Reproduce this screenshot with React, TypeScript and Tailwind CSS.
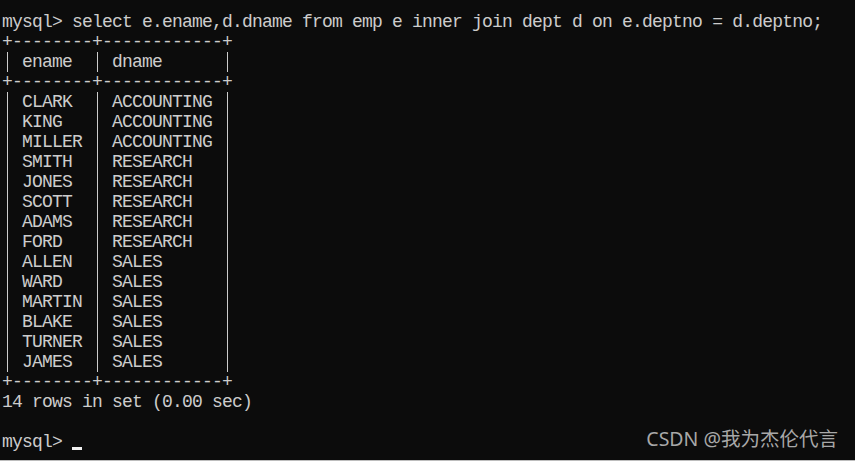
const rows: [string, string][] = [
  ["CLARK", "ACCOUNTING"],
  ["KING", "ACCOUNTING"],
  ["MILLER", "ACCOUNTING"],
  ["SMITH", "RESEARCH"],
  ["JONES", "RESEARCH"],
  ["SCOTT", "RESEARCH"],
  ["ADAMS", "RESEARCH"],
  ["FORD", "RESEARCH"],
  ["ALLEN", "SALES"],
  ["WARD", "SALES"],
  ["MARTIN", "SALES"],
  ["BLAKE", "SALES"],
  ["TURNER", "SALES"],
  ["JAMES", "SALES"],
];

const sep = "+--------+------------+";

// SimSun's "|" fills the whole cell, so draw it as a line
function Bar() {
  return (
    <span className="inline-flex w-[10px] h-[20px] pl-[5px]">
      <span className="w-[1px] h-full bg-[#cccccc]" />
    </span>
  );
}

function Row({ a, b }: { a: string; b: string }) {
  return (
    <div className="h-[20px] flex whitespace-pre">
      <Bar />
      <span>{` ${a.padEnd(6)} `}</span>
      <Bar />
      <span>{` ${b.padEnd(10)} `}</span>
      <Bar />
    </div>
  );
}

function Line({ children }: { children: string }) {
  return <div className="h-[20px] whitespace-pre">{children}</div>;
}

export default function App() {
  return (
    <div className="relative w-[855px] h-[461px] bg-[#0c0c0c] border-b border-[#bdbdbd] overflow-hidden">
      <div
        className="pt-[12px] pl-[2px] text-[#cccccc] text-[18px] leading-[20px] tracking-[-0.8px]"
        style={{ fontFamily: '"Liberation Mono", "DejaVu Sans Mono", monospace' }}
      >
        <Line>mysql&gt; select e.ename,d.dname from emp e inner join dept d on e.deptno = d.deptno;</Line>
        <Line>{sep}</Line>
        <Row a="ename" b="dname" />
        <Line>{sep}</Line>
        {rows.map(([a, b]) => (
          <Row key={a} a={a} b={b} />
        ))}
        <Line>{sep}</Line>
        <Line>14 rows in set (0.00 sec)</Line>
        <Line>{""}</Line>
        <div className="h-[20px] flex items-end whitespace-pre">
          <span className="self-stretch">{"mysql> "}</span>
          <span className="inline-block w-[10px] h-[3px] mb-[2px] bg-[#f0f0f0]" />
        </div>
      </div>

      <div
        className="absolute right-[17px] bottom-[8px] text-[19.5px] leading-[26px] text-[#a8a8a8]"
        style={{ fontFamily: '"Noto Sans", "Noto Sans CJK SC", sans-serif' }}
      >
        CSDN @我为杰伦代言
      </div>
    </div>
  );
}
